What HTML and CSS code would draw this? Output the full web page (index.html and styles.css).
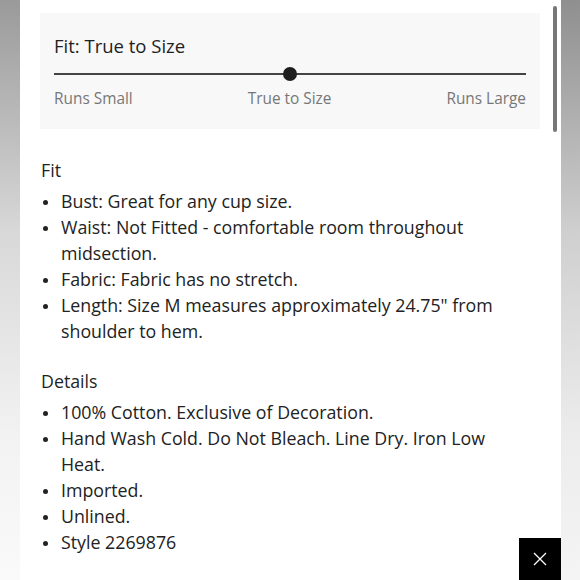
FILE: index.html
```html
<!DOCTYPE html>
<html>
<head>
<meta charset="utf-8">
<link rel="stylesheet" href="styles.css">
</head>
<body>
<div class="page">
  <div class="side side-left"></div>
  <main class="sheet">
    <section class="fit-box">
      <h2 class="fit-title">Fit: True to Size</h2>
      <div class="track"><span class="knob"></span></div>
      <div class="scale">
        <span>Runs Small</span>
        <span>True to Size</span>
        <span>Runs Large</span>
      </div>
    </section>
    <section class="block">
      <h3 class="block-title">Fit</h3>
      <ul class="list">
        <li>Bust: Great for any cup size.</li>
        <li>Waist: Not Fitted - comfortable room throughout midsection.</li>
        <li>Fabric: Fabric has no stretch.</li>
        <li>Length: Size M measures approximately 24.75" from shoulder to hem.</li>
      </ul>
    </section>
    <section class="block">
      <h3 class="block-title">Details</h3>
      <ul class="list">
        <li>100% Cotton. Exclusive of Decoration.</li>
        <li>Hand Wash Cold. Do Not Bleach. Line Dry. Iron Low Heat.</li>
        <li>Imported.</li>
        <li>Unlined.</li>
        <li>Style 2269876</li>
      </ul>
    </section>
    <div class="scrollbar"></div>
    <button class="close" aria-label="Close">
      <svg width="14" height="14" viewBox="0 0 14 14"><path d="M1 1L13 13M13 1L1 13" stroke="#fff" stroke-width="1.3" fill="none"/></svg>
    </button>
  </main>
  <div class="side side-right"></div>
</div>
</body>
</html>
```
FILE: styles.css
```css
html, body {
  margin: 0;
  padding: 0;
  height: 580px;
  overflow: hidden;
  background: #fff;
}
.page {
  display: flex;
  height: 580px;
  font-family: "Open Sans", "Liberation Sans", sans-serif;
  color: #222;
}
.side {
  width: 20px;
  flex: none;
}
.side-left {
  background: linear-gradient(to bottom, #9a9a9a 0%, #d8d8d8 40%, #f2f2f2 75%, #fafafa 100%);
}
.side-right {
  width: 19px;
  background: linear-gradient(to bottom, #8f8f8f 0%, #cfcfcf 40%, #ececec 75%, #f4f4f4 100%);
}
.sheet {
  flex: 1;
  position: relative;
  padding: 13px 21px 0 20px;
  background: #fff;
}
.fit-box {
  background: #f8f8f8;
  padding: 22px 14px 18px 14px;
  height: 76px;
}
.fit-title {
  margin: 0;
  font-size: 18.5px;
  font-weight: 400;
  line-height: 22px;
  color: #1f1f1f;
}
.track {
  position: relative;
  height: 2px;
  background: #444;
  margin-top: 16px;
}
.knob {
  position: absolute;
  left: 50%;
  top: 1px;
  width: 14px;
  height: 14px;
  margin: -7px 0 0 -7px;
  border-radius: 50%;
  background: #1e1e1e;
}
.scale {
  display: flex;
  justify-content: space-between;
  margin-top: 14px;
  font-size: 15.4px;
  line-height: 20px;
  color: #777;
}
.block {
  margin-top: 29px;
}
.block + .block {
  margin-top: 25px;
}
.block-title {
  margin: 0 0 6px 1px;
  font-size: 17.8px;
  font-weight: 400;
  line-height: 24px;
  color: #1f1f1f;
}
.list {
  margin: 0;
  padding: 0 0 0 21px;
  list-style: none;
}
.list li {
  position: relative;
  font-size: 17.8px;
  line-height: 26px;
  color: #222;
  padding-right: 40px;
}
.list li::before {
  content: "";
  position: absolute;
  left: -18px;
  top: 12px;
  width: 5px;
  height: 5px;
  border-radius: 50%;
  background: #222;
}
.scrollbar {
  position: absolute;
  right: 4px;
  top: 6px;
  width: 4px;
  height: 126px;
  border-radius: 2px;
  background: #777;
}
.close {
  position: absolute;
  right: 0;
  bottom: 0;
  width: 42px;
  height: 42px;
  border: 0;
  padding: 0;
  background: #000;
  display: flex;
  align-items: center;
  justify-content: center;
}
```
